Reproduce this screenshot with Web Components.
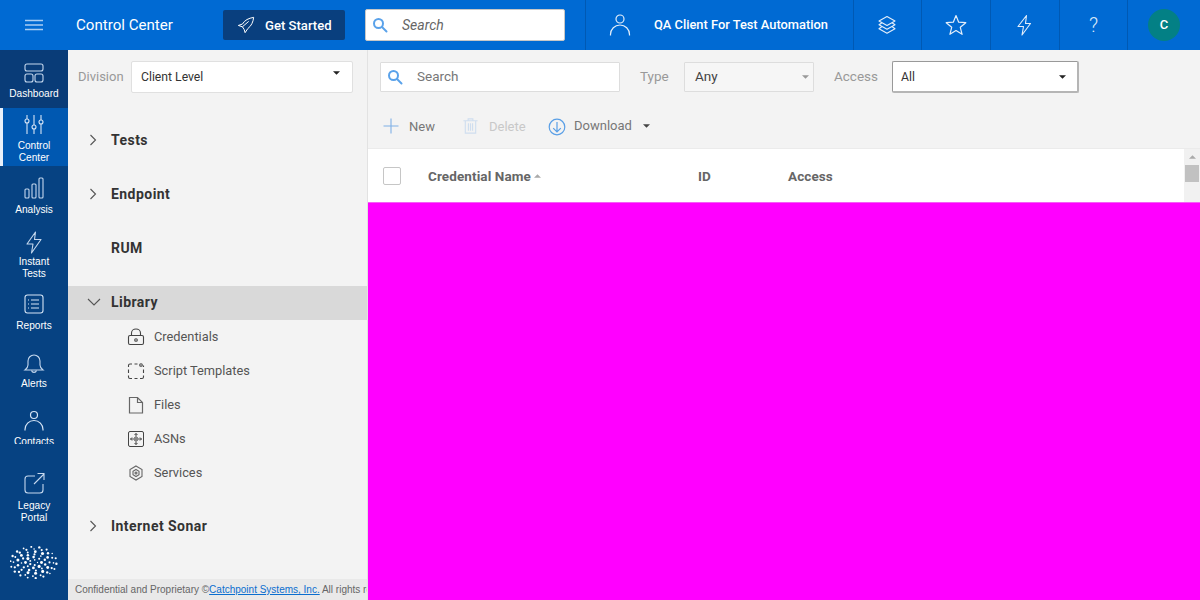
<!DOCTYPE html>
<html><head><meta charset="utf-8"><title>Control Center</title>
<style>
html,body{margin:0;padding:0;width:1200px;height:600px;overflow:hidden;font-family:Roboto,"Liberation Sans",sans-serif}
</style></head><body>
<app-shell>
  <top-bar slot="top"></top-bar>
  <side-rail slot="rail">
    <rail-item label="Dashboard" kind="dark"><svg viewBox="0 0 24 24" width="24" height="24" fill="none" stroke="#c5d8ee" stroke-width="1.1"><rect x="3" y="3" width="18" height="7" rx="2"/><rect x="3" y="13" width="8" height="8" rx="2"/><rect x="13" y="13" width="8" height="8" rx="2"/></svg></rail-item>
    <rail-item label="Control|Center" kind="active"><svg viewBox="0 0 24 24" width="24" height="24" fill="none" stroke="#d5e4f5" stroke-width="1.1"><path d="M5 3v4M5 11v11M12 3v10M12 17v5M19 3v5M19 12v10"/><circle cx="5" cy="9" r="2"/><circle cx="12" cy="15" r="2"/><circle cx="19" cy="10" r="2"/></svg></rail-item>
    <rail-item label="Analysis" kind="analysis"><svg viewBox="0 0 24 24" width="24" height="24" fill="none" stroke="#c5d8ee" stroke-width="1.1"><rect x="3" y="13" width="4" height="9" rx="1"/><rect x="10" y="8" width="4" height="14" rx="1"/><rect x="17" y="2" width="4" height="20" rx="1"/></svg></rail-item>
    <rail-item label="Instant|Tests" kind="tight"><svg viewBox="0 0 24 24" width="24" height="24" fill="none" stroke="#c5d8ee" stroke-width="1.1" stroke-linejoin="round"><path d="M13.5 2 5 14h6l-1.500 9L19 9.500h-6.500z"/></svg></rail-item>
    <rail-item label="Reports" kind="analysis"><svg viewBox="0 0 24 24" width="24" height="24" fill="none" stroke="#d5e4f5" stroke-width="1.1"><rect x="3" y="3" width="18" height="18" rx="2.500"/><path d="M9 8h8M9 12h8M9 16h8M6 8h1M6 12h1M6 16h1"/></svg></rail-item>
    <rail-item label="Alerts" kind="low"><svg viewBox="0 0 24 24" width="24" height="24" fill="none" stroke="#c5d8ee" stroke-width="1.1"><path d="M3 19c2-1.500 3-3 3-5v-4a6 6 0 0 1 12 0v4c0 2 1 3.500 3 5z"/><path d="M9.500 19.500a2.600 2.600 0 0 0 5 0"/></svg></rail-item>
    <rail-item label="Contacts" kind="low"><svg viewBox="0 0 24 24" width="24" height="24" fill="none" stroke="#d5e4f5" stroke-width="1.2"><circle cx="12" cy="6" r="3.500"/><path d="M3 21.500v-1a9 9 0 0 1 18 0v1"/></svg></rail-item>
    <rail-item slot="foot" label="Legacy|Portal" kind="legacy"><svg viewBox="0 0 24 24" width="24" height="24" fill="none" stroke="#c5d8ee" stroke-width="1.1"><path d="M13 5H6a3 3 0 0 0-3 3v11a3 3 0 0 0 3 3h12a3 3 0 0 0 3-3v-6"/><path d="M12 13 22 3M15.500 2.500H22V9"/></svg></rail-item>
    <dot-logo slot="foot"></dot-logo>
  </side-rail>
  <nav-panel slot="panel"></nav-panel>
  <cred-main slot="main"></cred-main>
</app-shell>
<script>
const tpl=(host,css,html)=>{const s=host.attachShadow({mode:'open'});s.innerHTML=`<style>${css}</style>${html}`;return s;};
const search=c=>`<svg viewBox="0 0 16 16" width="16" height="16" fill="none" stroke="${c}" stroke-width="2"><circle cx="6.500" cy="6.500" r="4.500"/><path d="m10 10 4.500 4.500" stroke-linecap="round"/></svg>`;
const chevR=`<svg viewBox="0 0 12 12" width="12" height="12" fill="none" stroke="#555" stroke-width="1.100"><path d="M3.500 1 8.500 6 3.500 11"/></svg>`;
const chevD=`<svg viewBox="0 0 14 12" width="14" height="12" fill="none" stroke="#555" stroke-width="1.100"><path d="M1 3l6 6 6-6"/></svg>`;
const caret=(c='#222')=>`<svg viewBox="0 0 8 4" width="7" height="4"><path d="M0 0h8L4 4z" fill="${c}"/></svg>`;
const caretUp=(c='#aaa')=>`<svg viewBox="0 0 8 4" width="7" height="4"><path d="M0 4h8L4 0z" fill="${c}"/></svg>`;

class AppShell extends HTMLElement{constructor(){super();tpl(this,
`:host{display:grid;grid-template-columns:68px 300px 832px;grid-template-rows:50px 550px;width:1200px;height:600px;overflow:hidden}
::slotted([slot=top]){grid-column:1/-1}`,
`<slot name="top"></slot><slot name="rail"></slot><slot name="panel"></slot><slot name="main"></slot>`);}}
customElements.define('app-shell',AppShell);

class TopBar extends HTMLElement{constructor(){super();tpl(this,
`:host{display:flex;align-items:center;background:#006ad3;color:#fff;height:50px}
.burger{width:68px;display:flex;justify-content:center;flex:none}
.title{font-size:15.100px;margin-left:8px;width:147px;flex:none}
.gs{width:122px;height:30px;box-sizing:border-box;background:#093f7e;border-radius:2px;display:flex;align-items:center;gap:10px;padding-left:14px;font-size:13.100px;font-weight:500;flex:none}
.s{margin-left:20px;width:200px;height:32px;box-sizing:border-box;background:#fff;border:1px solid #c7c7c7;border-radius:2px;display:flex;align-items:center;padding:0 0 1px 6px;gap:14px;color:#666;font-style:italic;font-size:14px;flex:none}
.right{margin-left:20px;display:flex;height:50px;align-items:stretch;flex:1}
.cell{border-left:1px solid #0059b3;display:flex;align-items:center;justify-content:center;box-sizing:border-box;flex:none}
.client{width:268px;justify-content:flex-start;padding-left:22px;gap:22px;font-size:12.850px;font-weight:500}
.client span{margin-top:-1px}
.ic{width:69px}.ic.n{width:68px}
.ic svg{margin-left:-2px}
.av{width:32px;height:32px;border-radius:50%;background:#038085;display:flex;align-items:center;justify-content:center;font-size:13px;font-weight:500;padding-bottom:1px;box-sizing:border-box}
.q{font-size:20px;font-weight:300;color:#dce9f8}`,
`<div class="burger"><svg width="20" height="12" viewBox="0 0 20 12"><path d="M1 1.500h18M1 6h18M1 10.500h18" stroke="#a9cdf3" stroke-width="1.300"/></svg></div>
<div class="title">Control Center</div>
<div class="gs"><svg viewBox="0 0 20 20" width="18" height="18" fill="none" stroke="#fff" stroke-width="1.100" stroke-linejoin="round"><path d="M18.500 1.500C13 2.500 8.500 4.500 6 9l-4.500 1.500L6 12l2 3 1 3.500 3-4.500c4-3 6-7.500 6.500-12.500z"/><path d="M6 12 13 6"/></svg><span>Get Started</span></div>
<div class="s">${search('#5aa2ea')}<span>Search</span></div>
<div class="right">
<div class="cell client"><svg viewBox="0 0 24 24" width="24" height="24" fill="none" stroke="#e3eefa" stroke-width="1.200"><circle cx="12" cy="6" r="4"/><path d="M2.500 22.500v-1a9.500 9.500 0 0 1 19 0v1"/></svg><span>QA Client For Test Automation</span></div>
<div class="cell ic n"><svg viewBox="0 0 22 22" width="22" height="22" fill="none" stroke="#e3eefa" stroke-width="1.100" stroke-linejoin="round"><path d="M11 2.500 19 7l-8 4.500L3 7z"/><path d="M6 8.700 3 10.800l8 4.500 8-4.500-3-2.100"/><path d="M6 12.500l-3 2.300 8 4.500 8-4.500-3-2.300"/></svg></div>
<div class="cell ic"><svg style="margin-left:0" viewBox="0 0 22 22" width="22" height="22" fill="none" stroke="#e3eefa" stroke-width="1.200" stroke-linejoin="round"><path d="M11 1.500l2.700 6.700 7.100.5-5.500 4.600 1.800 7L11 16.500l-6.100 3.800 1.800-7L1.200 8.700l7.100-.5z"/></svg></div>
<div class="cell ic"><svg viewBox="0 0 22 22" width="22" height="22" fill="none" stroke="#e3eefa" stroke-width="1.100" stroke-linejoin="round"><path d="M13.500 1.500 5 12.500h5.500l-1.500 8.500 8.500-11.500h-5z"/></svg></div>
<div class="cell ic n q">?</div>
<div class="cell" style="flex:1"><div class="av">C</div></div>
</div>`);}}
customElements.define('top-bar',TopBar);

class SideRail extends HTMLElement{constructor(){super();tpl(this,
`:host{display:flex;flex-direction:column;background:#064282;height:550px;overflow:hidden}
.nav{height:394px;overflow:hidden;flex:none}
.foot{display:flex;flex-direction:column;align-items:center;flex:1}`,
`<div class="nav"><slot></slot></div><div class="foot"><slot name="foot"></slot></div>`);}}
customElements.define('side-rail',SideRail);

class RailItem extends HTMLElement{constructor(){super();
const lines=this.getAttribute('label').split('|').map(t=>`<div>${t}</div>`).join('');
tpl(this,
`:host{display:flex;flex-direction:column;align-items:center;box-sizing:border-box;height:58px;color:#fff;font-size:10.150px;line-height:12px;text-align:center;padding-top:10px;width:68px;font-family:"Liberation Sans",Arial,sans-serif;--g:3px}
:host([kind=dark]){background:#093c78;padding-top:11px;--g:3px}
:host([kind=active]){background:#0058b1;border-left:3px solid #e8f0fa;padding-right:3px;padding-top:4px;--g:4px}
:host([kind=tight]){padding-top:6px;--g:2px}
:host([kind=analysis]){padding-top:10px;--g:4px}
:host([kind=low]){padding-top:11px;--g:3px}
:host([kind=legacy]){margin-top:16px;height:auto;padding-top:11px;--g:5px}
.l{margin-top:var(--g)}
svg,::slotted(svg){display:block}`,
`<slot></slot><div class="l">${lines}</div>`);}}
customElements.define('rail-item',RailItem);

class DotLogo extends HTMLElement{constructor(){super();
const rings=[[4,5,1],[8,8,1.35],[12,11,1.1],[16,13,1.35],[20,16,1.05],[23,18,1.05]];
let d='';
rings.forEach(([r,n,sz],i)=>{for(let a=0;a<n;a++){const t=(a+(i%2)*.5)/n*Math.PI*2+i*.4;
const x=23.5+r*Math.cos(t),y=16.5+r*.68*Math.sin(t);
const z=sz*(0.7+0.45*Math.abs(Math.sin(a*2.3+i*1.7)));
d+=`<circle cx="${x.toFixed(1)}" cy="${y.toFixed(1)}" r="${z.toFixed(2)}" fill="#fff"/>`;}});
tpl(this,`:host{display:block;margin-top:22px;width:48px;height:33px}svg{display:block}`,`<svg width="48" height="33" viewBox="0 0 48 33">${d}</svg>`);}}
customElements.define('dot-logo',DotLogo);

class TreeRow extends HTMLElement{constructor(){super();
const o=this.getAttribute('open')!==null,a=this.getAttribute('plain')!==null;
tpl(this,
`:host{display:flex;align-items:center;height:54px;font-size:14px;font-weight:700;color:#333;letter-spacing:.45px;box-sizing:border-box}
:host([open]){height:34px;background:#d9d9d9;padding-bottom:2px}
.a{width:43px;padding-left:19px;box-sizing:border-box;display:flex;flex:none}`,
`<span class="a">${a?'':(o?chevD:chevR)}</span><slot></slot>`);}}
customElements.define('tree-row',TreeRow);

class TreeLeaf extends HTMLElement{constructor(){super();tpl(this,
`:host{display:flex;align-items:center;height:34px;padding:0 0 1px 59px;box-sizing:border-box;gap:9px;font-size:12.800px;color:#555}
svg,::slotted(svg){display:block;flex:none}`,
`<slot name="i"></slot><slot></slot>`);}}
customElements.define('tree-leaf',TreeLeaf);

class NavPanel extends HTMLElement{constructor(){super();tpl(this,
`:host{display:flex;flex-direction:column;background:#f3f3f3;border-right:1px solid #e2e2e2;box-sizing:border-box;height:550px;overflow:hidden;position:relative}
.div{display:flex;align-items:center;padding:11px 0 0 10px;flex:none}
.lab{font-size:13px;color:#999;width:53px;flex:none;padding-bottom:1px}
.sel{width:222px;height:32px;box-sizing:border-box;background:#fff;border:1px solid #e0e0e0;border-radius:2px;display:flex;justify-content:space-between;padding:0 12px 0 9px;align-items:center;font-size:12.200px;color:#333}
.sel svg{margin-top:-9px}
.tree{margin-top:20px;flex:1}
.lib{margin-top:11px}
.kids{margin-bottom:9px}
.foot{height:21px;background:#e9e9e9;font-size:10px;color:#666;white-space:nowrap;overflow:hidden;display:flex;align-items:center;padding-left:7px;font-family:"Liberation Sans",Arial,sans-serif}
a{color:#0a6ecf;text-decoration:underline}`,
`<div class="div"><span class="lab">Division</span><div class="sel"><span>Client Level</span>${caret()}</div></div>
<div class="tree">
<tree-row>Tests</tree-row><tree-row>Endpoint</tree-row><tree-row plain>RUM</tree-row>
<div class="lib"><tree-row open>Library</tree-row></div>
<div class="kids">
<tree-leaf><svg slot="i" viewBox="0 0 18 18" width="18" height="18" fill="none" stroke="#444" stroke-width="1.100"><rect x="1.500" y="7.500" width="15" height="9" rx="1.500"/><path d="M4.500 7.500V5a4.500 4 0 0 1 9 0v2.500"/><circle cx="9" cy="12" r="1.300"/></svg>Credentials</tree-leaf>
<tree-leaf><svg slot="i" viewBox="0 0 18 18" width="18" height="18" fill="none" stroke="#444" stroke-width="1.100"><path d="M1.500 5V3.500a1.500 1.500 0 0 1 1.500-1.500h2M7.500 2h3M1.500 7.500v3.500M16.500 7.500v3.500M1.500 13.500V15a1.500 1.500 0 0 0 1.500 1.500h2M7.500 16.500h3M13 16.500h2a1.500 1.500 0 0 0 1.500-1.500v-1.500M16.500 5V3.500"/><circle cx="14" cy="3" r="1.300"/></svg>Script Templates</tree-leaf>
<tree-leaf><svg slot="i" viewBox="0 0 18 18" width="18" height="18" fill="none" stroke="#666" stroke-width="1.200"><path d="M2.500 1.500h8l5 5v10.500h-13zM10.500 1.500v5h5"/></svg>Files</tree-leaf>
<tree-leaf><svg slot="i" viewBox="0 0 18 18" width="18" height="18" fill="none" stroke="#444" stroke-width="1"><rect x="1.500" y="1.500" width="15" height="15" rx="1.500"/><path d="M9 3.500v11M3.500 9h11M7.500 5 9 3.500 10.500 5M7.500 13 9 14.500 10.500 13M5 7.500 3.500 9 5 10.500M13 7.500 14.500 9 13 10.500"/><rect x="7" y="7" width="4" height="4" fill="#888" stroke="none"/></svg>ASNs</tree-leaf>
<tree-leaf><svg slot="i" viewBox="0 0 18 18" width="18" height="18" fill="none" stroke="#666" stroke-width="1.100"><path d="M9 2l6 3.500v7L9 16l-6-3.500v-7z"/><path d="M9 5.500l3 1.700v3.600l-3 1.700-3-1.700V7.200z"/><circle cx="9" cy="9" r="1"/></svg>Services</tree-leaf>
</div>
<tree-row>Internet Sonar</tree-row>
</div>
<div class="foot"><span>Confidential and Proprietary ©<a>Catchpoint Systems, Inc.</a> All rights reserved.</span></div>`);}}
customElements.define('nav-panel',NavPanel);

class CredMain extends HTMLElement{constructor(){super();tpl(this,
`:host{display:flex;flex-direction:column;height:550px;background:#f3f3f3;overflow:hidden}
.filters{display:flex;align-items:center;height:54px;padding-left:12px;flex:none;font-size:14px;box-sizing:border-box}
.inp{width:240px;height:30px;box-sizing:border-box;background:#fff;border:1px solid #ddd;display:flex;align-items:center;gap:14px;padding:0 0 0 6px;color:#777;border-radius:1px;font-size:13.500px}
.inp span,.any span{margin-top:-2px}
.inp svg{margin-top:-1px}
.lab{color:#999;font-size:13.500px;flex:none;padding-bottom:2px}
.l1{width:44px;margin-left:20px}
.l2{width:58px;margin-left:20px}
.any{width:130px;height:30px;box-sizing:border-box;background:#f6f6f6;border:1px solid #ddd;display:flex;justify-content:space-between;align-items:center;padding:0 4px 0 10px;color:#444;border-radius:1px;font-size:13.500px}
.all{width:187px;height:32px;box-sizing:border-box;background:#fff;border:1px solid #999;border-bottom:2px solid #b5b5b5;border-right:2px solid #b5b5b5;border-radius:2px;display:flex;justify-content:space-between;align-items:center;padding:0 11px 0 8px;color:#333;font-size:12.200px}
.actions{display:flex;align-items:center;height:44px;flex:none;font-size:13px;color:#777;border-bottom:1px solid #ebebeb;padding-left:14px}
.act{display:flex;align-items:center}
.head{display:flex;height:53px;background:#fff;flex:none}
.cols{flex:1;display:flex;align-items:center;font-size:13.500px;font-weight:700;color:#666;letter-spacing:.1px;padding-top:1px}
.cb{width:18px;height:18px;box-sizing:border-box;border:1px solid #c6c6c6;border-radius:2px;margin:0 27px 0 15px;background:#fff}
.c1{width:270px;display:flex;align-items:center;gap:3px}.c2{width:90px}
.sb{width:16px;background:#f1f1f1;display:flex;flex-direction:column;align-items:center;padding-top:6px;box-sizing:border-box}
.thumb{width:14px;height:17px;background:#c1c1c1;margin-top:6px}
.magenta{flex:1;background:#f0f;border-top:1px solid #f55ff5;box-sizing:border-box}`,
`<div class="filters">
<div class="inp">${search('#5aa2ea')}<span>Search</span></div>
<span class="lab l1">Type</span>
<div class="any"><span>Any</span>${caret('#999')}</div>
<span class="lab l2">Access</span>
<div class="all"><span>All</span>${caret()}</div>
</div>
<div class="actions">
<div class="act" style="gap:9px;width:80px"><svg viewBox="0 0 18 18" width="18" height="18" fill="none" stroke="#7fb0e6" stroke-width="1.100"><path d="M9 1.500v15M1.500 9h15"/></svg><span>New</span></div>
<div class="act" style="gap:10px;width:85px;color:#c8c8c8"><svg viewBox="0 0 18 18" width="17" height="18" fill="none" stroke="#cfdeef" stroke-width="1.200"><path d="M1.500 3.500h15M6.500 3.500v-2h5v2M3.500 3.500v13h11v-13M6.800 6v8M9 6v8M11.200 6v8"/></svg><span>Delete</span></div>
<div class="act" style="gap:8px"><svg style="margin:2px 0 0 1px" viewBox="0 0 18 18" width="18" height="18" fill="none" stroke="#5a9fe6" stroke-width="1.200"><circle cx="9" cy="9" r="7.800"/><path d="M9 4v10M5.200 10.200 9 14l3.800-3.800"/></svg><span style="margin-top:-2px">Download</span><span style="margin-left:3px;display:flex;margin-top:-1px">${caret('#444')}</span></div>
</div>
<div class="head">
<div class="cols"><div class="cb"></div><div class="c1"><span>Credential Name</span>${caretUp('#aaa')}</div><div class="c2">ID</div><div>Access</div></div>
<div class="sb">${caretUp('#aaa')}<div class="thumb"></div></div>
</div>
<div class="magenta"></div>`);}}
customElements.define('cred-main',CredMain);
</script>
</body></html>
